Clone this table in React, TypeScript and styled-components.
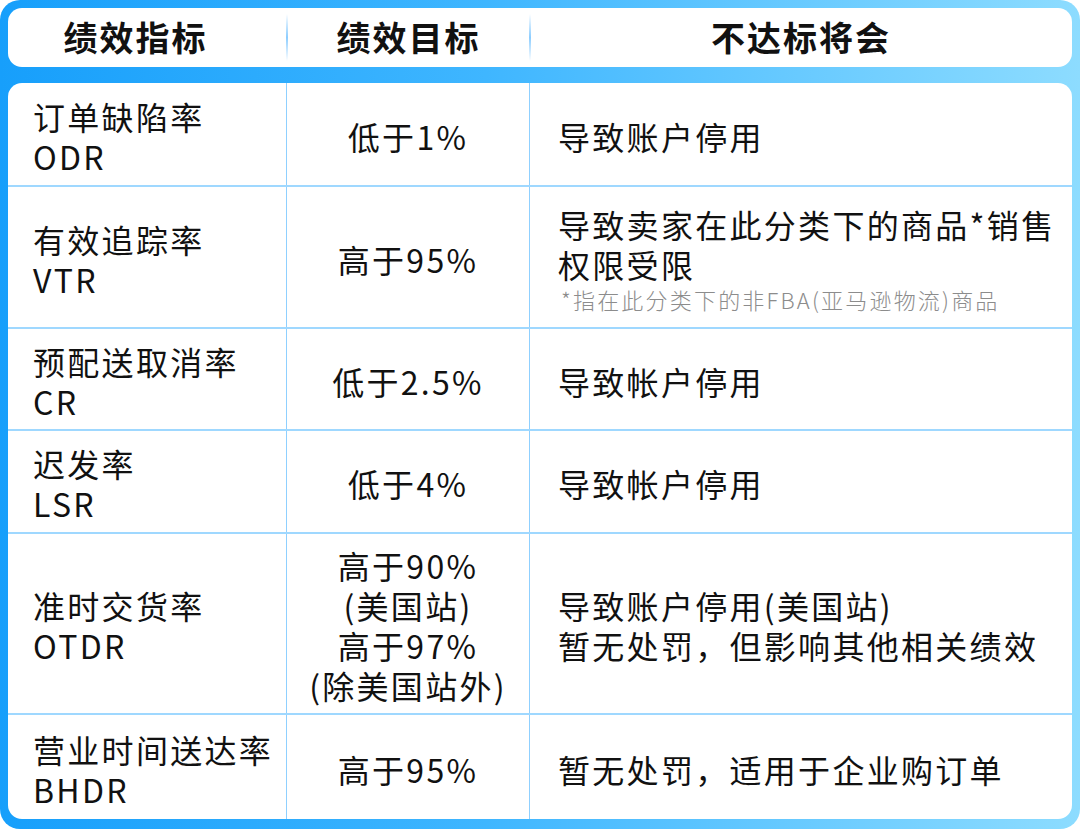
import * as React from 'react';
import styled, { createGlobalStyle } from 'styled-components';

const GlobalStyle = createGlobalStyle`
  html, body {
    margin: 0;
    padding: 0;
    background: #ffffff;
  }
  * {
    box-sizing: border-box;
  }
`;

type Row = {
  name: string;
  code: string;
  target: string[];
  result: string[];
  note?: string;
  height: number;
};

const rows: Row[] = [
  { name: '订单缺陷率', code: 'ODR', target: ['低于1%'], result: ['导致账户停用'], height: 104 },
  {
    name: '有效追踪率',
    code: 'VTR',
    target: ['高于95%'],
    result: ['导致卖家在此分类下的商品*销售', '权限受限'],
    note: '*指在此分类下的非FBA(亚马逊物流)商品',
    height: 142,
  },
  { name: '预配送取消率', code: 'CR', target: ['低于2.5%'], result: ['导致帐户停用'], height: 102 },
  { name: '迟发率', code: 'LSR', target: ['低于4%'], result: ['导致帐户停用'], height: 103 },
  {
    name: '准时交货率',
    code: 'OTDR',
    target: ['高于90%', '(美国站)', '高于97%', '(除美国站外)'],
    result: ['导致账户停用(美国站)', '暂无处罚，但影响其他相关绩效'],
    height: 181,
  },
  { name: '营业时间送达率', code: 'BHDR', target: ['高于95%'], result: ['暂无处罚，适用于企业购订单'], height: 104 },
];

export default function App() {
  return (
    <>
      <GlobalStyle />
      <Frame>
        <HeaderCard>
          <HeadCell $first>绩效指标</HeadCell>
          <HeadCell $divider>绩效目标</HeadCell>
          <HeadCell $divider>不达标将会</HeadCell>
        </HeaderCard>
        <BodyCard>
          {rows.map((row, i) => (
            <TableRow key={row.code} $last={i === rows.length - 1} style={{ height: row.height }}>
              <NameCell>
                <Line>{row.name}</Line>
                <Line>{row.code}</Line>
              </NameCell>
              <TargetCell>
                {row.target.map((t) => (
                  <Line key={t}>{t}</Line>
                ))}
              </TargetCell>
              <ResultCell>
                {row.result.map((r) => (
                  <Line key={r}>{r}</Line>
                ))}
                {row.note && <Note>{row.note}</Note>}
              </ResultCell>
            </TableRow>
          ))}
        </BodyCard>
      </Frame>
    </>
  );
}

const Frame = styled.div`
  width: 1080px;
  height: 829px;
  padding: 8px 8px 10px 8px;
  border-radius: 20px;
  background: linear-gradient(90deg, #179ffb 0%, #3fb6ff 45%, #8ddcff 100%);
  display: flex;
  flex-direction: column;
  gap: 16px;
  font-family: "Noto Sans CJK SC", "Noto Sans", sans-serif;
  color: #111111;
`;

const columns = '279px 243px 1fr';

const HeaderCard = styled.div`
  height: 59px;
  flex-shrink: 0;
  background: #ffffff;
  border-radius: 14px;
  display: grid;
  grid-template-columns: ${columns};
`;

const HeadCell = styled.div<{ $first?: boolean; $divider?: boolean }>`
  position: relative;
  display: flex;
  align-items: center;
  justify-content: center;
  font-size: 34px;
  font-weight: 700;
  letter-spacing: 2px;
  padding-right: ${(p) => (p.$first ? '24px' : '0')};
  padding-bottom: 2px;

  &::before {
    content: '';
    display: ${(p) => (p.$divider ? 'block' : 'none')};
    position: absolute;
    left: -1px;
    top: 6px;
    bottom: 6px;
    width: 2px;
    background: linear-gradient(180deg, rgba(140, 205, 255, 0) 0%, #8ccdff 50%, rgba(140, 205, 255, 0) 100%);
  }
`;

const BodyCard = styled.div`
  flex: 1;
  background: #ffffff;
  border-radius: 14px;
  display: flex;
  flex-direction: column;
  overflow: hidden;
`;

const TableRow = styled.div<{ $last?: boolean }>`
  display: grid;
  grid-template-columns: ${columns};
  border-bottom: ${(p) => (p.$last ? 'none' : '2px solid #9fd8ff')};
`;

const Cell = styled.div`
  display: flex;
  flex-direction: column;
  justify-content: center;
  padding-top: 3px;
  font-size: 32px;
  line-height: 40px;
  letter-spacing: 2.3px;
`;

const NameCell = styled(Cell)`
  padding-left: 25px;
  border-right: 1.5px solid #8fd0ff;
`;

const TargetCell = styled(Cell)`
  align-items: center;
  text-align: center;
  border-right: 1.5px solid #8fd0ff;
`;

const ResultCell = styled(Cell)`
  padding-left: 28px;
`;

const Line = styled.div`
  white-space: nowrap;
`;

const Note = styled.div`
  font-size: 22px;
  line-height: 30px;
  letter-spacing: 2.2px;
  font-weight: 300;
  color: #8c8c8c;
  white-space: nowrap;
  padding-left: 3px;
`;
